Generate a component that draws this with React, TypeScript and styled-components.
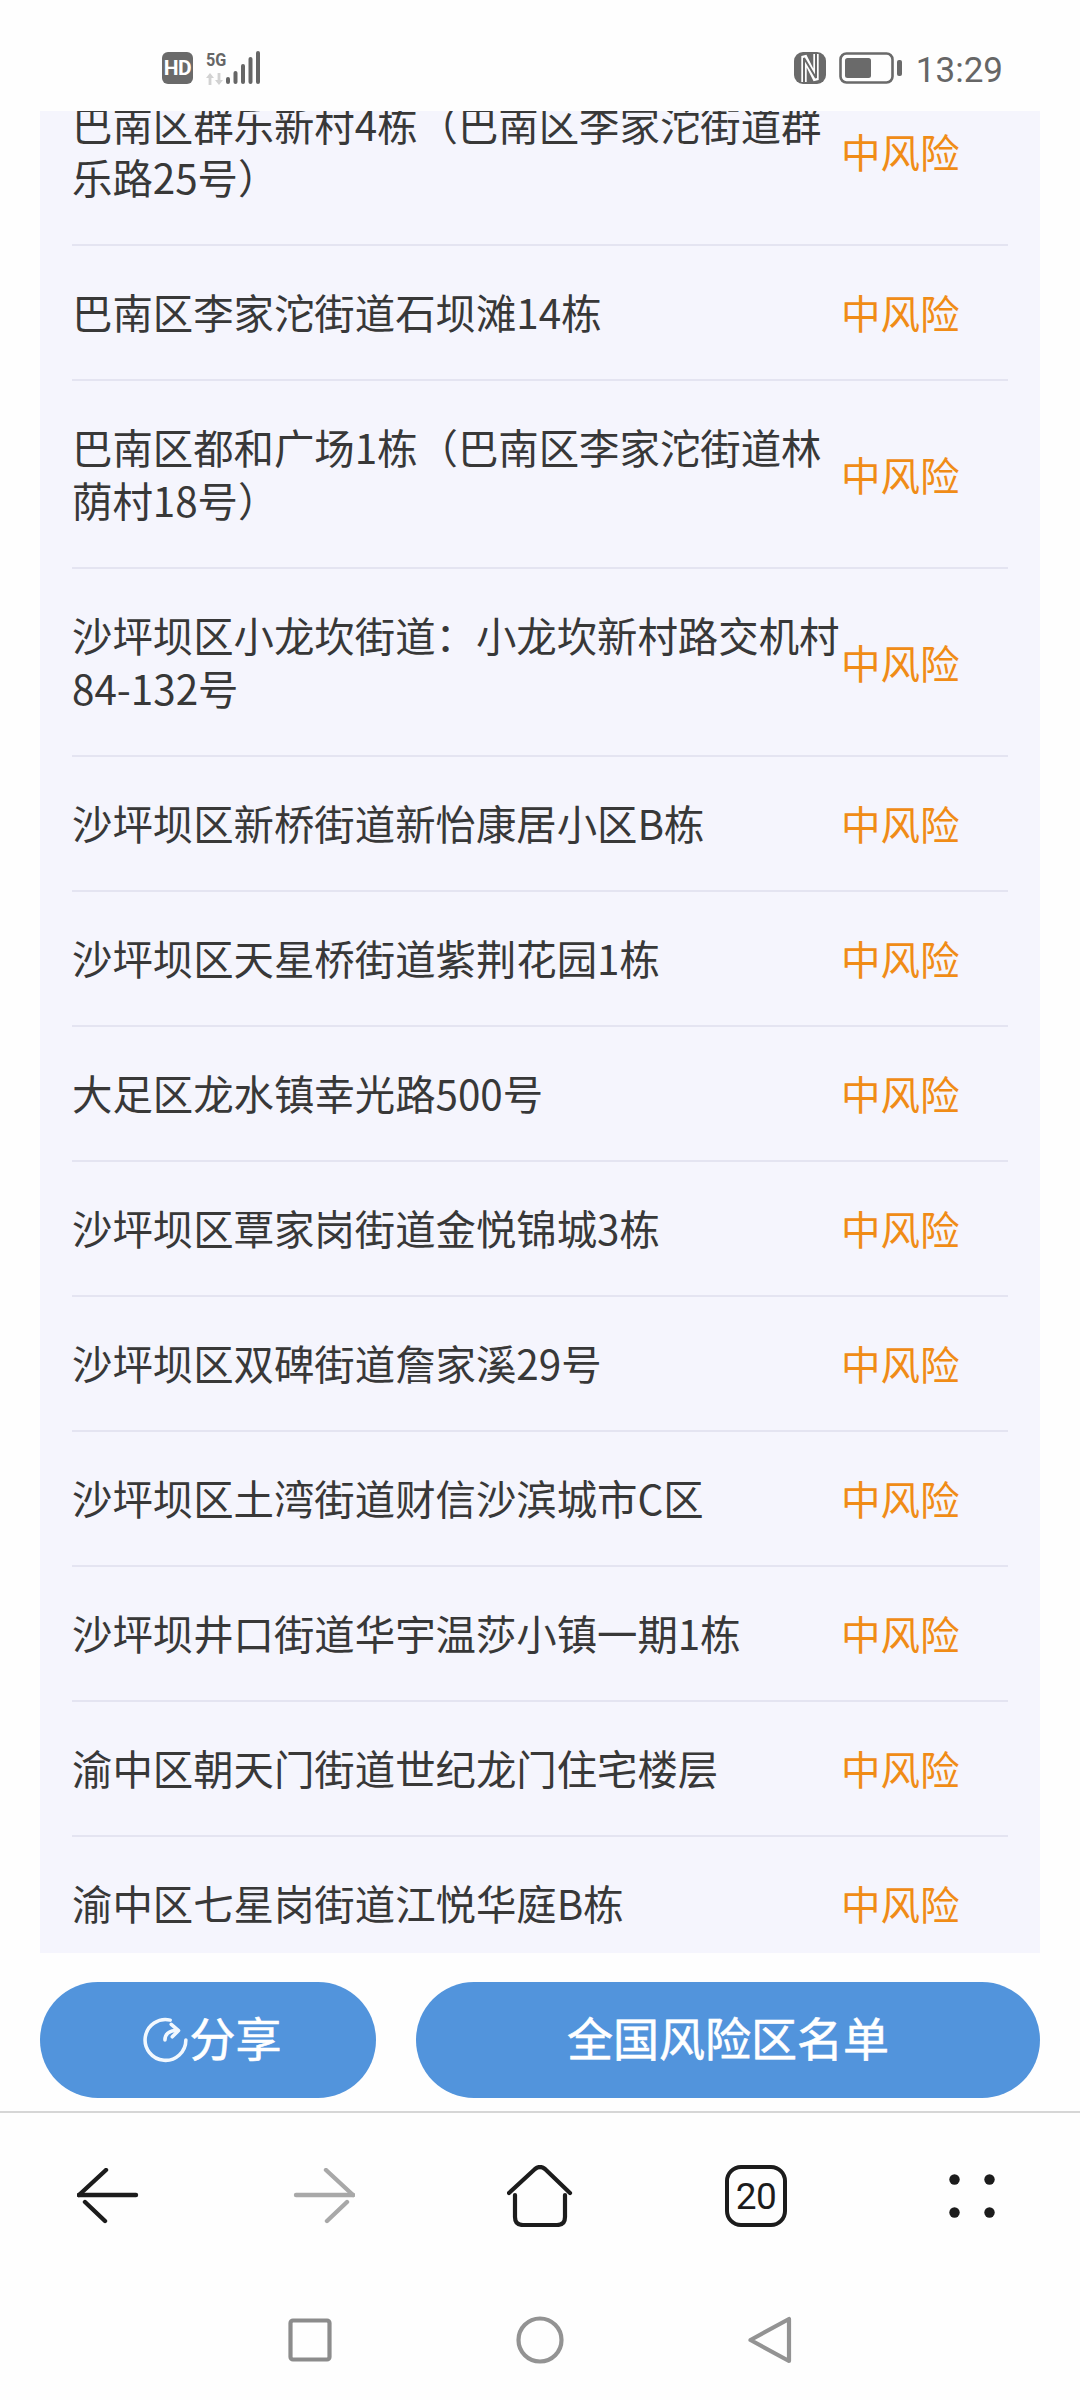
import React from "react";
import styled, { createGlobalStyle } from "styled-components";

const Global = createGlobalStyle`
  html, body { margin: 0; padding: 0; background: #fefefe; }
  * { box-sizing: border-box; }
`;

const Screen = styled.div`
  width: 1080px;
  height: 2400px;
  display: flex;
  flex-direction: column;
  background: #fefefe;
  overflow: hidden;
  font-family: "Noto Sans CJK SC", "Noto Sans", sans-serif;
`;

const StatusBar = styled.header`
  height: 111px;
  flex: none;
  display: flex;
  align-items: flex-start;
  justify-content: space-between;
  padding: 51px 77px 0 162px;
`;
const StatusGroup = styled.div`
  display: flex;
  align-items: center;
  height: 34px;
  gap: ${(p: { $gap: number }) => p.$gap}px;
`;
const HdBadge = styled.span`
  width: 31px;
  height: 32px;
  margin-right: 10px;
  border-radius: 6px;
  background: #6a6a6a;
  color: #fff;
  font: 700 21px/32px "Liberation Sans Narrow", "Roboto", sans-serif;
  text-align: center;
  letter-spacing: -0.5px;
`;
const NetStack = styled.div`
  width: 17px;
  height: 33px;
  display: flex;
  flex-direction: column;
  justify-content: space-between;
`;
const FiveG = styled.span`
  font: 700 18px/15px "Liberation Sans Narrow", "Roboto", sans-serif;
  color: #666;
  transform: scaleX(0.9);
  transform-origin: left center;
  white-space: nowrap;
`;
const Clock = styled.span`
  font: 400 35px/38px "Roboto", sans-serif;
  margin-top: 6px;
  color: #666;
`;

const Panel = styled.main`
  width: 1000px;
  height: 1842px;
  flex: none;
  margin: 0 40px;
  padding: 0 32px;
  background: #f5f5fd;
  overflow: hidden;
`;
const RiskList = styled.ul`
  list-style: none;
  margin: -53px 0 0;
  padding: 0;
`;
const RiskRow = styled.li`
  display: flex;
  align-items: center;
  padding: 39px 0 41px;
  border-bottom: 2px solid #e4e4f1;
`;
const Place = styled.span`
  flex: 1;
  min-width: 0;
  font-size: 40.4px;
  line-height: 53px;
  color: #383838;
`;
const Level = styled.span`
  width: 167px;
  flex: none;
  font-size: 39.5px;
  line-height: 53px;
  color: #f08c17;
`;

const ActionBar = styled.div`
  height: 160px;
  flex: none;
  padding: 29px 40px 0;
  display: flex;
  gap: 40px;
  border-bottom: 2px solid #d6d6d6;
`;
const ActionButton = styled.button`
  flex: ${(p: { $wide?: boolean }) => (p.$wide ? "0 0 624px" : "0 0 336px")};
  height: 116px;
  border: 0;
  border-radius: 58px;
  background: #5294dc;
  color: #fff;
  font-family: inherit;
  font-size: 46px;
  font-weight: 400;
  -webkit-text-stroke: 0.6px #fff;
  display: flex;
  align-items: center;
  justify-content: center;
  padding: 0 0 8px ${(p: { $wide?: boolean }) => (p.$wide ? "0" : "8px")};
  & > svg { margin: 8px 1px 0 0; }
`;

const Toolbar = styled.nav`
  height: 160px;
  flex: none;
  display: grid;
  grid-template-columns: repeat(5, 216px);
  align-items: start;
  justify-items: center;
  padding-top: 52px;
`;
const ToolSlot = styled.div`
  height: 62px;
  display: flex;
  align-items: center;
  justify-content: center;
`;
const TabCount = styled.span`
  width: 62px;
  height: 62px;
  border: 4px solid #1c1c1c;
  border-radius: 16px;
  display: flex;
  align-items: center;
  justify-content: center;
  font: 400 37px/1 "Roboto", sans-serif;
  letter-spacing: -0.5px;
  color: #1c1c1c;
`;

const SystemNav = styled.div`
  flex: none;
  display: flex;
  justify-content: center;
  align-items: center;
  gap: 184px;
  padding-top: 43px;
  & > svg { flex: none; }
`;

const places = [
  "巴南区群乐新村4栋（巴南区李家沱街道群乐路25号）",
  "巴南区李家沱街道石坝滩14栋",
  "巴南区都和广场1栋（巴南区李家沱街道林荫村18号）",
  "沙坪坝区小龙坎街道：小龙坎新村路交机村84-132号",
  "沙坪坝区新桥街道新怡康居小区B栋",
  "沙坪坝区天星桥街道紫荆花园1栋",
  "大足区龙水镇幸光路500号",
  "沙坪坝区覃家岗街道金悦锦城3栋",
  "沙坪坝区双碑街道詹家溪29号",
  "沙坪坝区土湾街道财信沙滨城市C区",
  "沙坪坝井口街道华宇温莎小镇一期1栋",
  "渝中区朝天门街道世纪龙门住宅楼层",
  "渝中区七星岗街道江悦华庭B栋",
];

const ArrowIcon = ({ color, flip }: { color: string; flip?: boolean }) => (
  <svg width="62" height="56" viewBox="0 0 62 56" fill="none" stroke={color} strokeWidth="4.4" strokeLinecap="round">
    <g transform={flip ? "matrix(-1 0 0 1 62 0)" : undefined}>
      <path d="M2 27H59" />
      <path d="M2 27L29 2" />
      <path d="M8 34L28 53" />
    </g>
  </svg>
);

const HomeIcon = () => (
  <svg width="66" height="62" viewBox="0 0 66 62" fill="none" stroke="#1c1c1c" strokeWidth="4.2" strokeLinecap="round" strokeLinejoin="round">
    <path d="M2 28L28 4Q33 0 38 4L63 28" />
    <path d="M8 30V52Q8 60 16 60H50Q58 60 58 52V30" />
  </svg>
);

const DotsIcon = () => (
  <svg width="46" height="44" viewBox="0 0 46 44" fill="#1c1c1c">
    <circle cx="5.5" cy="5.5" r="5.2" />
    <circle cx="40.5" cy="5.5" r="5.2" />
    <circle cx="5.5" cy="38.5" r="5.2" />
    <circle cx="40.5" cy="38.5" r="5.2" />
  </svg>
);

const ShareIcon = () => (
  <svg width="46" height="46" viewBox="0 0 44 44" fill="none" stroke="#f2f8fe" strokeWidth="3.4" strokeLinecap="round" strokeLinejoin="round">
    <path d="M26 3A19.5 19.5 0 1 0 41 22" />
    <path d="M21 22Q21 14 31 13" />
    <path d="M27 7L34 13L28 19" />
  </svg>
);

const SignalIcon = () => (
  <svg width="34" height="34" viewBox="0 0 34 34" fill="#666">
    <rect x="0" y="26" width="4" height="7" rx="2" />
    <rect x="7.5" y="20" width="4" height="13" rx="2" />
    <rect x="15" y="13" width="4" height="20" rx="2" />
    <rect x="22.5" y="6" width="4" height="27" rx="2" />
    <rect x="30" y="0" width="4" height="33" rx="2" />
  </svg>
);

const TrafficIcon = () => (
  <svg width="17" height="12" viewBox="0 0 17 12" fill="#d2d2d2">
    <path d="M4 0L8 5H5.4V12H2.6V5H0Z" />
    <path d="M13 12L17 7H14.4V0H11.6V7H9Z" />
  </svg>
);

const NfcIcon = () => (
  <svg width="32" height="32" viewBox="0 0 32 32" fill="none">
    <rect width="32" height="32" rx="9" fill="#6a6a6a" />
    <path d="M10 30V4L22 28V2" stroke="#fff" strokeWidth="5.4" strokeLinejoin="bevel" />
    <path d="M10 30V6L22 26V2" stroke="#6a6a6a" strokeWidth="2" strokeLinejoin="bevel" />
  </svg>
);

const BatteryIcon = () => (
  <svg width="64" height="32" viewBox="0 0 64 32" fill="none">
    <rect x="1.5" y="1.5" width="52" height="29" rx="6" stroke="#6a6a6a" strokeWidth="2.6" />
    <rect x="6" y="6" width="26" height="20" rx="2.5" fill="#6a6a6a" />
    <rect x="58" y="8" width="5" height="16" rx="2" fill="#6a6a6a" />
  </svg>
);

export default function App() {
  return (
    <Screen>
      <Global />
      <StatusBar>
        <StatusGroup $gap={3}>
          <HdBadge>HD</HdBadge>
          <NetStack>
            <FiveG>5G</FiveG>
            <TrafficIcon />
          </NetStack>
          <SignalIcon />
        </StatusGroup>
        <StatusGroup $gap={13}>
          <NfcIcon />
          <BatteryIcon />
          <Clock>13:29</Clock>
        </StatusGroup>
      </StatusBar>
      <Panel>
        <RiskList>
          {places.map((place) => (
            <RiskRow key={place}>
              <Place>{place}</Place>
              <Level>中风险</Level>
            </RiskRow>
          ))}
        </RiskList>
      </Panel>
      <ActionBar>
        <ActionButton>
          <ShareIcon />
          分享
        </ActionButton>
        <ActionButton $wide>全国风险区名单</ActionButton>
      </ActionBar>
      <Toolbar>
        <ToolSlot><ArrowIcon color="#1c1c1c" /></ToolSlot>
        <ToolSlot><ArrowIcon color="#a8a8a8" flip /></ToolSlot>
        <ToolSlot><HomeIcon /></ToolSlot>
        <ToolSlot><TabCount>20</TabCount></ToolSlot>
        <ToolSlot><DotsIcon /></ToolSlot>
      </Toolbar>
      <SystemNav>
        <svg width="44" height="44" viewBox="0 0 44 44" fill="none" stroke="#8c8c8c" strokeWidth="4.2" strokeLinejoin="round">
          <rect x="2.5" y="2.5" width="39" height="39" rx="2.5" />
        </svg>
        <svg width="48" height="48" viewBox="0 0 48 48" fill="none" stroke="#939393" strokeWidth="4.2">
          <circle cx="24" cy="24" r="21.5" />
        </svg>
        <svg width="44" height="48" viewBox="0 0 44 48" fill="none" stroke="#939393" strokeWidth="4.2" strokeLinejoin="round">
          <path d="M41 3V45L2.5 24Z" />
        </svg>
      </SystemNav>
    </Screen>
  );
}
